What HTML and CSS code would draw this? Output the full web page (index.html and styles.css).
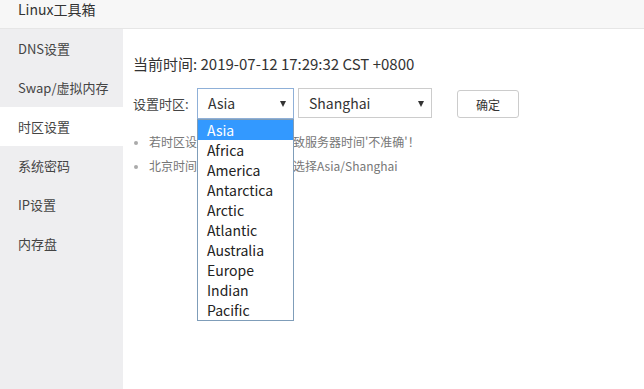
FILE: index.html
```html
<!DOCTYPE html>
<html lang="zh-CN">
    <head>
        <meta charset="UTF-8" />
        <meta name="viewport" content="width=device-width, initial-scale=1.0" />
        <title>Linux工具箱</title>
        <link rel="stylesheet" href="styles.css">
    </head>
    <body>
        <div class="header">Linux工具箱</div>
        <div class="layout">
            <div class="sidebar">
                <div class="nav-item">DNS设置</div>
                <div class="nav-item">Swap/虚拟内存</div>
                <div class="nav-item active">时区设置</div>
                <div class="nav-item">系统密码</div>
                <div class="nav-item">IP设置</div>
                <div class="nav-item">内存盘</div>
            </div>
            <div class="main">
                <div class="current-time">当前时间: 2019-07-12 17:29:32 CST +0800</div>
                <div class="tz-row">
                    <span class="tz-label">设置时区:</span>
                    <div class="select select-region focused">
                        <span class="select-value">Asia</span>
                        <ul class="dropdown">
                            <li class="selected">Asia</li>
                            <li>Africa</li>
                            <li>America</li>
                            <li>Antarctica</li>
                            <li>Arctic</li>
                            <li>Atlantic</li>
                            <li>Australia</li>
                            <li>Europe</li>
                            <li>Indian</li>
                            <li>Pacific</li>
                        </ul>
                    </div>
                    <div class="select select-city">
                        <span class="select-value">Shanghai</span>
                    </div>
                    <button class="btn">确定</button>
                </div>
                <ul class="tips">
                    <li>若时区设置不正确，将会导致服务器时间'不准确'！</li>
                    <li>北京时间（东八区）用户请选择Asia/Shanghai</li>
                </ul>
            </div>
        </div>
    </body>
</html>
```

FILE: styles.css
```css
html,
body {
    margin: 0;
    height: 100%;
}

body {
    font-family: "Noto Sans CJK SC", "Noto Sans", sans-serif;
    color: #333;
    background-color: #fff;
}

/* Header */
.header {
    height: 28px;
    line-height: 18px;
    padding-left: 18px;
    font-size: 14px;
    background-color: #f7f7f7;
    border-bottom: 1px solid #e6e6e6;
}

.layout {
    display: flex;
    height: calc(100% - 29px);
}

/* Sidebar */
.sidebar {
    width: 123px;
    flex-shrink: 0;
    background-color: #eeeef0;
}

.nav-item {
    height: 39px;
    line-height: 39px;
    padding-left: 18px;
    font-size: 13px;
    color: #444;
}

.nav-item.active {
    background-color: #fff;
}

/* Main */
.main {
    flex: 1;
    padding: 25px 0 0 10px;
}

.current-time {
    font-size: 15px;
    line-height: 20px;
}

.tz-row {
    display: flex;
    align-items: center;
    margin-top: 14px;
    height: 31px;
}

.tz-label {
    width: 64px;
    font-size: 13px;
    color: #444;
}

.select {
    position: relative;
    box-sizing: border-box;
    height: 30px;
    line-height: 28px;
    padding-left: 10px;
    font-size: 14px;
    border: 1px solid #ccc;
    background-color: #fff;
}

.select::after {
    content: "";
    position: absolute;
    top: 12px;
    right: 7px;
    border-left: 3px solid transparent;
    border-right: 3px solid transparent;
    border-top: 6px solid #333;
}

.select-region {
    width: 97px;
    height: 31px;
    align-self: flex-start;
}

.select.focused {
    border-color: #8fb0d8;
}

.select-city {
    width: 134px;
    margin-left: 4px;
    align-self: flex-start;
}

.dropdown {
    position: absolute;
    top: 30px;
    left: -1px;
    width: 97px;
    box-sizing: border-box;
    margin: 0;
    padding: 0;
    list-style: none;
    background-color: #fff;
    border: 1px solid #7f9db9;
    z-index: 10;
}

.dropdown li {
    height: 20px;
    line-height: 20px;
    padding-left: 9px;
    font-size: 14px;
    color: #222;
}

.dropdown li.selected {
    background-color: #3399ff;
    color: #fff;
}

.btn {
    width: 62px;
    height: 28px;
    margin-left: 25px;
    margin-top: 1px;
    padding: 0;
    font-family: inherit;
    font-size: 12px;
    color: #333;
    background-color: #fff;
    border: 1px solid #ccc;
    border-radius: 3px;
}

/* Tips */
.tips {
    margin: 11px 0 0;
    padding: 0 0 0 16px;
    font-size: 12px;
    line-height: 24px;
    color: #777;
}

.tips li::marker {
    color: #aaa;
    font-size: 10px;
}
```
